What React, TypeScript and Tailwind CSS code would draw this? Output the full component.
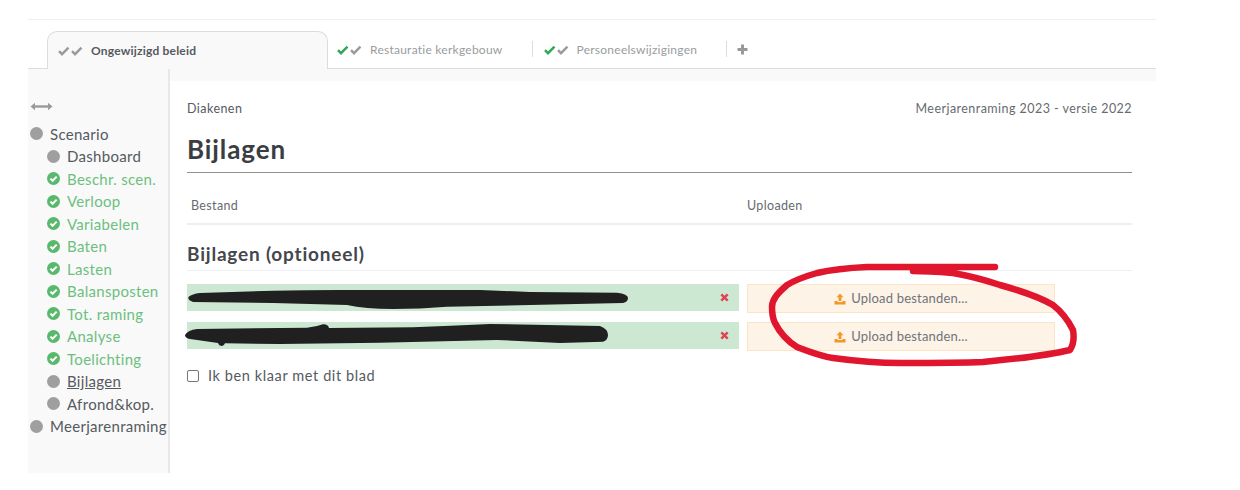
import React from "react";

const font = { fontFamily: '"Lato", "Noto Sans", sans-serif' };

function Checks({ first }: { first: string }) {
  return (
    <svg width="26" height="10" viewBox="0 0 26 10" className="shrink-0">
      <path d="M1 5.2 L4 8.2 L10.5 1.6" fill="none" stroke={first} strokeWidth="2.4" />
      <path d="M14 5.2 L17 8.2 L23.5 1.6" fill="none" stroke="#9a9a9a" strokeWidth="2.4" />
    </svg>
  );
}

function Dot({ done }: { done?: boolean }) {
  if (done) {
    return (
      <svg width="13" height="13" viewBox="0 0 13 13" className="shrink-0">
        <circle cx="6.5" cy="6.5" r="6.5" fill="#58b96c" />
        <path d="M3.4 6.6 L5.6 8.8 L9.7 4.6" fill="none" stroke="#fff" strokeWidth="2" />
      </svg>
    );
  }
  return <span className="w-[13px] h-[13px] rounded-full bg-[#a09ea0] shrink-0" />;
}

function NavItem({ label, done, sub, active }: { label: string; done?: boolean; sub?: boolean; active?: boolean }) {
  return (
    <div className={`flex items-center h-[22.5px] gap-[7px] ${sub ? "pl-[19px]" : "pl-[2px]"}`}>
      <Dot done={done} />
      <span className={`text-[15px] whitespace-nowrap tracking-[0.3px] ${done ? "text-[#6cc07f]" : "text-[#555a60]"} ${active ? "underline" : ""}`}>
        {label}
      </span>
    </div>
  );
}

function Tab({ label, check }: { label: string; check: string }) {
  return (
    <div className="flex items-center gap-[7px] h-[38px] pt-[2px] pr-[29px] text-[12px] text-[#999ca0] tracking-[0.25px] whitespace-nowrap">
      <Checks first={check} />
      <span>{label}</span>
    </div>
  );
}

function Row({ mt }: { mt: string }) {
  return (
    <div className={`flex gap-[8px] ${mt}`}>
      <div className="w-[552px] h-[27px] bg-[#cce8d3] flex items-center justify-end pr-[10px]">
        <svg width="9" height="9" viewBox="0 0 9 9">
          <path d="M1.3 1.3 L7.7 7.7 M7.7 1.3 L1.3 7.7" stroke="#e0444e" strokeWidth="2.4" />
        </svg>
      </div>
      <div className="w-[308px] h-[29px] bg-[#fef3e7] border border-[#fde4c4] flex items-center justify-center gap-[5px] text-[13px] text-[#6f747a] tracking-[0.2px]">
        <svg width="12" height="12" viewBox="0 0 12 12">
          <path d="M6 0.5 L9.5 4.3 H7.4 V8 H4.6 V4.3 H2.5 Z M0.5 8 H3.6 V9 H8.4 V8 H11.5 V11.5 H0.5 Z" fill="#f0982a" />
        </svg>
        <span>Upload bestanden...</span>
      </div>
    </div>
  );
}

export default function App() {
  return (
    <div className="relative w-[1240px] h-[490px] bg-white overflow-hidden" style={font}>
      <div className="ml-[28px] w-[1128px] pt-[19px]">
        <div className="border-t border-[#f0f0f0] h-[12px]" />
        {/* tab bar */}
        <div className="flex items-end h-[38px] border-b border-[#dcdcdc]">
          <div className="w-[19px]" />
          <div className="w-[281px] h-[38px] -mb-px bg-[#f9f9f9] border border-b-0 border-[#dcdcdc] rounded-t-[10px] flex items-center gap-[7px] pl-[10px] text-[12px] font-bold text-[#555a60] tracking-[0.2px] whitespace-nowrap">
            <Checks first="#9a9a9a" />
            <span>Ongewijzigd beleid</span>
          </div>
          <div className="flex items-center h-[38px] pl-[9px]">
            <Tab label="Restauratie kerkgebouw" check="#2fa84f" />
            <div className="w-px h-[16px] bg-[#dddddd] mr-[11px]" />
            <Tab label="Personeelswijzigingen" check="#2fa84f" />
            <div className="w-px h-[16px] bg-[#dddddd] mr-[10px]" />
            <svg width="11" height="11" viewBox="0 0 11 11" className="mt-[1px]">
              <path d="M5.5 0.5 V10.5 M0.5 5.5 H10.5" stroke="#999999" strokeWidth="3" />
            </svg>
          </div>
        </div>
        <div className="flex h-[404px]">
          {/* sidebar */}
          <aside className="w-[142px] shrink-0 bg-[#f9f9f9] border-r-2 border-[#e8e8e8] pt-[33px]">
            <div className="pl-[2px] h-[20px]">
              <svg width="23" height="9" viewBox="0 0 23 9">
                <path d="M2 4.5 H21" stroke="#9a9a9a" strokeWidth="2.4" />
                <path d="M0.5 4.5 L5 0.8 V8.2 Z M22.5 4.5 L18 0.8 V8.2 Z" fill="#9a9a9a" />
              </svg>
            </div>
            <div className="pt-[0.5px]">
              <NavItem label="Scenario" />
              <NavItem label="Dashboard" sub />
              <NavItem label="Beschr. scen." done sub />
              <NavItem label="Verloop" done sub />
              <NavItem label="Variabelen" done sub />
              <NavItem label="Baten" done sub />
              <NavItem label="Lasten" done sub />
              <NavItem label="Balansposten" done sub />
              <NavItem label="Tot. raming" done sub />
              <NavItem label="Analyse" done sub />
              <NavItem label="Toelichting" done sub />
              <NavItem label="Bijlagen" sub active />
              <NavItem label="Afrond&kop." sub />
              <NavItem label="Meerjarenraming" />
            </div>
          </aside>
          {/* main */}
          <main className="flex-1 flex flex-col">
            <div className="h-[12px] bg-[#f9f9f9] shrink-0" />
            <div className="pl-[17px] pr-[24px] text-[#555a60]">
              <div className="flex justify-between items-center h-[16px] mt-[20px] text-[12.5px] tracking-[0.45px]">
                <span>Diakenen</span>
                <span className="text-[#666b70]">Meerjarenraming 2023 - versie 2022</span>
              </div>
              <h1 className="mt-[14px] h-[37px] leading-[37px] text-[26px] font-bold text-[#3a3d42] tracking-[0.9px]">Bijlagen</h1>
              <div className="border-b border-[#8f8f8f] h-[1px] mt-[4px]" />
              <div className="flex h-[52px] pt-[16px] border-b-2 border-[#eeeeee] items-center text-[12.5px] tracking-[0.35px] text-[#666b70]">
                <span className="w-[560px] pl-[4px]">Bestand</span>
                <span>Uploaden</span>
              </div>
              <h2 className="h-[46px] pt-[14px] flex items-center border-b border-[#eceff3] text-[19px] font-bold text-[#44474c] tracking-[0.8px]">
                Bijlagen (optioneel)
              </h2>
              <Row mt="mt-[13px]" />
              <Row mt="mt-[9px]" />
              <label className="flex items-center gap-[9px] mt-[17px] h-[16px] text-[14.5px] tracking-[0.6px] text-[#555a60]">
                <span className="w-[12px] h-[12px] border border-[#777777] rounded-[2px] bg-white shrink-0" />
                <span>Ik ben klaar met dit blad</span>
              </label>
            </div>
          </main>
        </div>
      </div>
      {/* drawn-on-top scribbles */}
      <svg className="absolute left-0 top-0 pointer-events-none" width="1240" height="490" viewBox="0 0 1240 490" fill="none">
        <path
          d="M188.7 296.7 Q192 294 200 293 L273 290.7 Q305 290 340 290 L480 290 L530 292 L617 292.7 Q628 294 628 298 Q628 302 623 303 L530 305 L447 306.7 Q420 309 393 309 Q365 309 347 305 L273 303 L193 302 Q187 300 188.7 296.7 Z"
          fill="#202020"
        />
        <path
          d="M185 335 Q188 330 197 329 L307 327.7 Q316 327 323 324.3 Q328 324 329 328 L413 327.3 Q450 326 490 324 L600 326 Q608 329 608 335 Q608 340 603 341.7 L560 343 L497 340 L380 342.7 L280 344 L225 343.3 Q224 346 222 346 Q219 346 218 343 L190 339 Q185 338 185 335 Z"
          fill="#202020"
        />
        <path
          d="M995 267 L867 267 C 845 268 830 270 817 273 C 803 277 795 280 787 285 C 778 293 772 299 772 307 C 772 314 773 319 775 323 C 781 335 789 342 797 347 C 810 352 820 356 833 358 C 855 361 880 363 900 363 C 930 363 960 363 983 362 C 1015 359 1045 356 1070 350 C 1074 344 1074 336 1073 330 C 1068 320 1062 312 1053 305 C 1038 296 1018 290 1000 285 C 985 280 970 276 953 273 C 940 272 925 271 913 271"
          stroke="#e0162e"
          strokeWidth="6.5"
          strokeLinecap="round"
          strokeLinejoin="round"
        />
      </svg>
    </div>
  );
}
